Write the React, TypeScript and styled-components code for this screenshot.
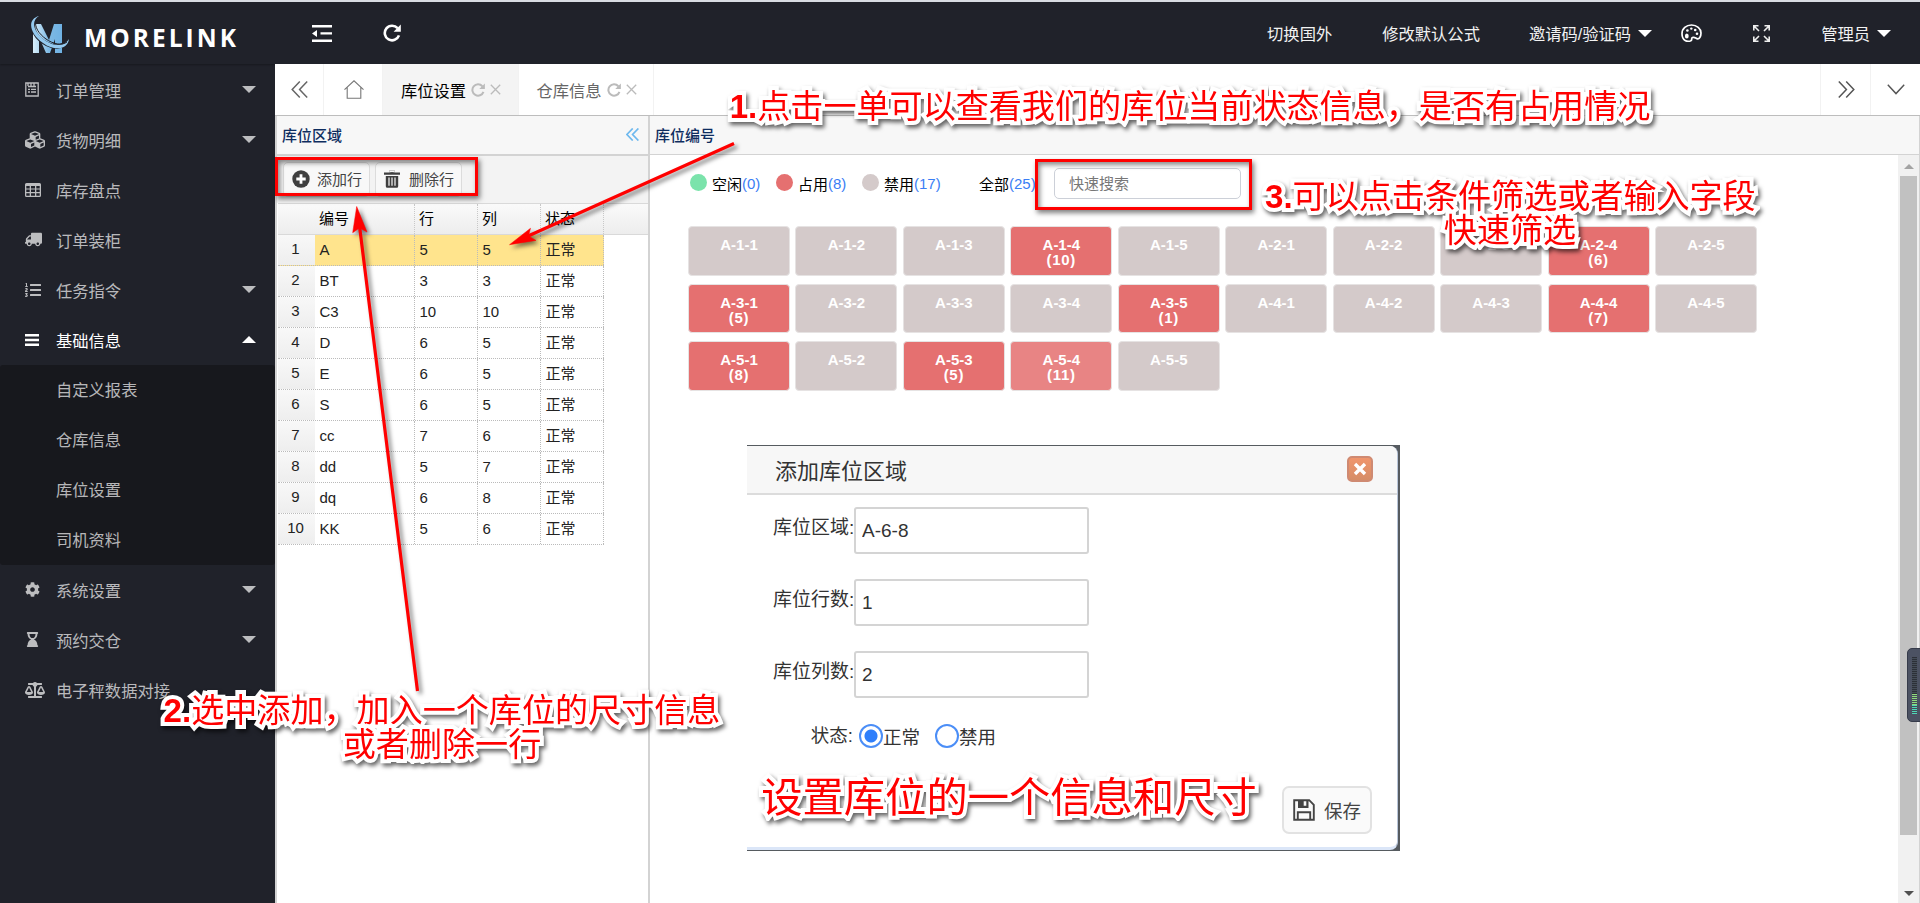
import React from "react";
import styled, { createGlobalStyle, css } from "styled-components";
import { FaBalanceScale, FaCubes, FaCog, FaHourglassEnd, FaListOl, FaTruck } from "react-icons/fa";

const GlobalStyle = createGlobalStyle`
  * { box-sizing: border-box; }
  body {
    margin: 0;
    overflow: hidden;
    background: #fff;
    font-family: "Liberation Sans", "Noto Sans CJK SC", sans-serif;
    font-size: 15px;
    color: #000;
  }
  button, input { font-family: inherit; margin: 0; }
`;

const Page = styled.div`
  position: relative;
  display: flex;
  width: 1920px;
  height: 903px;
  overflow: hidden;
  border-top: 2px solid #d9dce2;
`;

/* ---------- sidebar ---------- */
const Sidebar = styled.nav`
  flex: 0 0 275px;
  background: #20222a;
`;
const Logo = styled.div`
  display: flex;
  height: 62px;
  padding: 13px 0 0 29px;
  box-shadow: 0 1px 2px rgba(0, 0, 0, 0.3);
  margin-bottom: 1px;
`;
const Item = styled.div<{ $on?: boolean }>`
  display: flex;
  align-items: center;
  height: 50px;
  padding: 0 19px 1px 25px;
  font-size: 16.3px;
  color: ${(p) => (p.$on ? "#fff" : "rgba(255,255,255,.7)")};
  svg { display: block; }
`;
const ItemIcon = styled.span`
  flex: 0 0 31px;
`;
const ItemLabel = styled.span`
  flex: 1;
  white-space: nowrap;
`;
const Caret = styled.i<{ $up?: boolean; $light?: boolean }>`
  width: 0;
  height: 0;
  border: 7.5px solid transparent;
  ${(p) =>
    p.$up
      ? css`border-bottom-color: #fff; border-top-width: 0;`
      : css`border-top-color: ${p.$light ? "#fff" : "rgba(255,255,255,.7)"}; border-bottom-width: 0;`}
`;
const SubMenu = styled.div`
  background: #17181d;
  border-radius: 3px;
`;
const SubItem = styled.div`
  height: 50px;
  padding-left: 56px;
  font-size: 16.3px;
  line-height: 51px;
  color: rgba(255, 255, 255, 0.7);
`;

/* ---------- top bar and tabs ---------- */
const Main = styled.div`
  flex: 1;
  display: flex;
  flex-direction: column;
  min-width: 0;
`;
const TopBar = styled.header`
  display: flex;
  align-items: center;
  height: 62px;
  background: #20222a;
  color: #f2f2f2;
  font-size: 16.3px;
  padding: 0 29px 0 37px;
  svg { display: block; }
`;
const TopTool = styled.span<{ $gap: number }>`
  display: flex;
  align-items: center;
  gap: 7px;
  white-space: nowrap;
  margin-left: ${(p) => p.$gap}px;
`;
const TabBar = styled.div`
  display: flex;
  height: 52px;
  border-bottom: 1px solid #bdbdbd;
  color: #666;
`;
const TabCell = styled.div<{ $w: number; $on?: boolean; $left?: boolean }>`
  display: flex;
  align-items: center;
  justify-content: center;
  gap: 5px;
  width: ${(p) => p.$w}px;
  padding-left: 1px;
  font-size: 16.3px;
  background: ${(p) => (p.$on ? "#f4f4f4" : "#fff")};
  color: ${(p) => (p.$on ? "#000" : "#666")};
  border-${(p) => (p.$left ? "left" : "right")}: 1px solid #f2f2f2;
  svg { display: block; }
`;
const Spacer = styled.div`
  flex: 1;
`;

/* ---------- panels ---------- */
const Panels = styled.div`
  flex: 1;
  display: flex;
  min-height: 0;
`;
const AreaPanel = styled.section`
  flex: 0 0 375px;
  display: flex;
  flex-direction: column;
  border-left: 2px solid #d3d3d3;
  border-right: 2px solid #d3d3d3;
`;
const SlotPanel = styled.section`
  flex: 1;
  display: flex;
  flex-direction: column;
  border-right: 1px solid #d3d3d3;
`;
const PanelTitle = styled.div<{ $line: number }>`
  display: flex;
  align-items: center;
  justify-content: space-between;
  height: ${(p) => 38 + p.$line}px;
  padding: 0 9px 2px 5px;
  background: #f7f7f7;
  border-bottom: ${(p) => p.$line}px solid #d3d3d3;
  color: #0e2d5f;
  font-weight: 500;
`;
const Toolbar = styled.div`
  display: flex;
  gap: 5px;
  height: 47px;
  padding: 6px 6px;
  background: #f3f3f3;
`;
const ToolButton = styled.button<{ $gap: number }>`
  display: flex;
  align-items: center;
  gap: ${(p) => p.$gap}px;
  width: 87px;
  height: 35px;
  padding: 0 0 2px 8px;
  border: 1px solid #dcdcdc;
  border-radius: 5px;
  background: #f8f8f8;
  color: #444;
  font-size: 15px;
  white-space: nowrap;
`;
const columns = "37px 100px 63px 63px 63px";
const GridHead = styled.div`
  display: grid;
  grid-template-columns: ${columns};
  height: 32px;
  margin-left: 1px;
  border-top: 1px solid #d9d9d9;
  border-bottom: 1px solid #d9d9d9;
  background: linear-gradient(#fafafa, #ededed);
`;
const HeadCell = styled.div`
  padding-left: 4px;
  line-height: 29px;
  border-right: 1px dotted #c8c8c8;
`;
const GridRow = styled.div<{ $on?: boolean }>`
  display: grid;
  grid-template-columns: ${columns};
  width: 326px;
  height: 31px;
  margin-left: 1px;
  border-bottom: 1px dotted #bbb;
  background: ${(p) => (p.$on ? "#ffe48d" : "#fff")};
`;
const Num = styled.div`
  background: linear-gradient(#f8f8f8, #eeeeee);
  text-align: center;
  line-height: 28px;
  color: #222;
  padding-right: 2px;
`;
const Cell = styled.div`
  padding-left: 4.5px;
  line-height: 30px;
  border-right: 1px dotted #bbb;
  color: #222;
`;
const SlotBody = styled.div`
  flex: 1;
  display: flex;
  min-height: 0;
`;
const SlotContent = styled.div`
  flex: 1;
  padding: 13px 0 0 38px;
`;
const Filters = styled.div`
  display: flex;
  align-items: center;
  height: 31px;
  padding-left: 2px;
`;
const Legend = styled.span<{ $w: number }>`
  display: flex;
  align-items: center;
  width: ${(p) => p.$w}px;
  padding-bottom: 1px;
  white-space: nowrap;
  em { font-style: normal; color: #3a7ef5; }
`;
const Dot = styled.i<{ $c: string }>`
  width: 17px;
  height: 17px;
  margin: -2px 5px 0 0;
  border-radius: 50%;
  background: ${(p) => p.$c};
`;
const Search = styled.input`
  width: 187px;
  height: 31px;
  padding: 0 14px;
  border: 1px solid #ccd0d8;
  border-radius: 5px;
  font-size: 15px;
  background: #fff;
  &::placeholder { color: #777; }
`;
const Tiles = styled.div`
  display: grid;
  grid-template-columns: repeat(10, 102px);
  column-gap: 5.45px;
  row-gap: 8px;
  margin-top: 27px;
`;
const Tile = styled.div<{ $kind: "off" | "used" | "hover" }>`
  height: 49.5px;
  padding-top: 10.4px;
  border: 1px solid #e6e3e3;
  border-radius: 4px;
  background: ${(p) => ({ off: "#d4caca", used: "#e57070", hover: "#e88484" })[p.$kind]};
  color: #fff;
  font-weight: 700;
  text-align: center;
  line-height: 15px;
  small { display: block; font-size: 15px; letter-spacing: 0.7px; }
`;
const ScrollTrack = styled.div`
  display: flex;
  flex-direction: column;
  align-items: center;
  justify-content: space-between;
  width: 21px;
  background: #f1f1f1;
  padding: 9px 0 7px;
`;
const Thumb = styled.div`
  width: 17px;
  height: 659px;
  margin: 7px 0 auto;
  background: #c1c1c1;
`;
const Arrow = styled.i<{ $up?: boolean }>`
  border: 5px solid transparent;
  ${(p) =>
    p.$up
      ? css`border-top: 0; border-bottom-color: #a3a3a3;`
      : css`border-bottom: 0; border-top-color: #505050;`}
`;
const Gauge = styled.div`
  position: absolute;
  left: 1907px;
  top: 646px;
  width: 16px;
  height: 74px;
  padding: 8px 5px 8px 4px;
  border: 1px solid #363b4a;
  border-radius: 5px 0 0 5px;
  background: #4c5263;
`;
const GaugeBar = styled.div<{ $h: number; $c: string }>`
  height: ${(p) => p.$h}px;
  background: repeating-linear-gradient(${(p) => p.$c} 0 1px, #454d58 1px 2px);
`;

/* ---------- dialog ---------- */
const Dialog = styled.div`
  position: absolute;
  left: 747px;
  top: 443px;
  width: 653px;
  height: 406px;
  background: #565b60;
  padding: 1px 2px 1px 0;
`;
const DialogInner = styled.div`
  display: flex;
  flex-direction: column;
  height: 404px;
  background: #fff;
  border-radius: 0 8px 8px 0;
  border-bottom: 3px solid #dbe6f8;
  border-right: 1px solid #b9c6da;
  overflow: hidden;
`;
const DialogHead = styled.div`
  display: flex;
  align-items: center;
  justify-content: space-between;
  height: 49px;
  padding: 0 24px 2px 28px;
  background: #f7f7f7;
  border-bottom: 2px solid #dcdcdc;
  font-size: 22px;
  color: #333;
`;
const CloseButton = styled.button`
  display: flex;
  align-items: center;
  justify-content: center;
  width: 26px;
  height: 26px;
  padding: 0;
  border: 2px solid #cf8a72;
  border-radius: 5px;
  background: linear-gradient(#f0956c, #d68d66);
`;
const Form = styled.div`
  display: flex;
  flex-direction: column;
  gap: 25px;
  padding: 12px 0 0 26px;
`;
const Field = styled.label`
  display: flex;
  height: 47px;
  font-size: 19px;
  color: #333;
`;
const FieldLabel = styled.span<{ $gap?: number }>`
  width: 80px;
  margin-right: ${(p) => p.$gap ?? 1}px;
  line-height: 42px;
  text-align: right;
  white-space: nowrap;
`;
const FieldInput = styled.input`
  width: 235px;
  height: 47px;
  padding: 0 6px;
  border: 2px solid #d4d4d4;
  border-radius: 3px;
  font-size: 19px;
  color: #333;
`;
const Radios = styled.div`
  display: flex;
  align-items: center;
  height: 26px;
  font-size: 18.5px;
  color: #333;
`;
const Radio = styled.span<{ $on?: boolean }>`
  width: 24px;
  height: 24px;
  border: 2px solid #4b8ef7;
  border-radius: 50%;
  background: ${(p) => (p.$on ? "radial-gradient(#2f7ffb 0 6px, #fff 7px)" : "#fff")};
`;
const RadioLabel = styled.span`
  width: 52px;
`;
const SaveButton = styled.button`
  display: flex;
  align-items: center;
  gap: 9px;
  align-self: flex-end;
  width: 90px;
  height: 48px;
  margin: 37px 25px 0 0;
  padding: 0 0 1px 9px;
  border: 2px solid #e2e2e2;
  border-radius: 7px;
  background: #fafafa;
  color: #444;
  font-size: 18.5px;
  white-space: nowrap;
`;

/* ---------- annotations ---------- */
const Note = styled.div<{ $x: number; $y: number; $w: number; $size: number }>`
  position: absolute;
  left: ${(p) => p.$x}px;
  top: ${(p) => p.$y}px;
  width: ${(p) => p.$w}px;
  font-size: ${(p) => p.$size}px;
  line-height: 34px;
  text-align: center;
  white-space: nowrap;
  color: #f00;
  -webkit-text-stroke: 8px #fff;
  paint-order: stroke fill;
  stroke-linejoin: round;
  filter: drop-shadow(2px 3px 2px rgba(0, 0, 0, 0.6));
  b { font-weight: 700; }
`;
const RedFrame = styled.div<{ $x: number; $y: number; $w: number; $h: number }>`
  position: absolute;
  left: ${(p) => p.$x}px;
  top: ${(p) => p.$y}px;
  width: ${(p) => p.$w}px;
  height: ${(p) => p.$h}px;
  border: 3px solid #f00;
  box-shadow: 2px 3px 5px rgba(0, 0, 0, 0.5), inset 2px 3px 5px rgba(0, 0, 0, 0.45);
`;
const Arrows = styled.svg`
  position: absolute;
  left: 0;
  top: -2px;
  filter: drop-shadow(3px 3px 2px rgba(0, 0, 0, 0.5));
`;

/* ---------- icons ---------- */
const LogoArt = () => (
  <svg width="208" height="42" viewBox="0 0 208 42">
    <defs>
      <linearGradient id="mk" x1="0" x2="1">
        <stop offset="0" stopColor="#d8effb" />
        <stop offset="0.55" stopColor="#7db9e4" />
        <stop offset="1" stopColor="#6fb2e4" />
      </linearGradient>
    </defs>
    <path d="M4 9h8l8 16 5-16h8v29h-7V24l-5 14h-4L10 22v16H4z" fill="url(#mk)" />
    <path d="M6 4C0 13 8 24 18 29c8 4 16 3 21-3" fill="none" stroke="#20222a" strokeWidth="4.5" />
    <path d="M10 1C3 5 3 14 13 23c9 8 21 10 27 1-1 10-14 13-26 4C0 18-2 4 10 1z" fill="#94c9ee" />
    <path d="M7 5c-2 7 3 14 10 19 7 5 16 7 21 3" fill="none" stroke="#20222a" strokeWidth="1" />
    <text x="55" y="32" textLength="152" lengthAdjust="spacing" fontFamily="Open Sans" fontWeight="700" fontSize="24.500" fill="#fff">
      MORELINK
    </text>
  </svg>
);
const FormIcon = () => (
  <svg width="14" height="15" viewBox="0 0 14 15" fill="none" stroke="currentColor" strokeWidth="1.3">
    <path d="M.8 1h12.4v13H.8zM3 4.5h8M3 1v3M6 1v3M9 1v3M3 7.3h2M6 7.3h5M3 10h2M6 10h5" />
  </svg>
);
const TableIcon = () => (
  <svg width="16" height="14" viewBox="0 0 16 14">
    <path fill="currentColor" fillRule="evenodd" d="M1.500 0h13Q16 0 16 1.500v11Q16 14 14.500 14h-13Q0 14 0 12.500v-11Q0 0 1.500 0zM1.300 3v2.400h3.400V3zm4.700 0v2.400h4V3zm5.300 0v2.400h3.400V3zM1.300 6.600V9h3.400V6.600zm4.700 0V9h4V6.600zm5.300 0V9h3.400V6.600zM1.300 10.300v2.400h3.400v-2.400zm4.700 0v2.400h4v-2.400zm5.300 0v2.400h3.400v-2.400z" />
  </svg>
);
const BarsIcon = () => (
  <svg width="14" height="12" viewBox="0 0 14 12" fill="currentColor">
    <path d="M0 0h14v2.4H0zM0 4.8h14v2.4H0zM0 9.6h14V12H0z" />
  </svg>
);
const FoldIcon = () => (
  <svg width="20" height="17" viewBox="0 0 20 17" fill="#fff">
    <path d="M0 0h20v2.4H0zM8.5 7.2H20v2.4H8.5zM0 14.6h20V17H0zM5 5v7L0 8.4z" />
  </svg>
);
const Refresh = ({ size, color }: { size: number; color: string }) => (
  <svg width={size} height={size} viewBox="0 0 18 18">
    <path d="M14.6 4.2A7.3 7.3 0 1 0 16 11.4" fill="none" stroke={color} strokeWidth="2.6" />
    <path d="M17.8.6v7.2h-7.2z" fill={color} />
  </svg>
);
const Cross = () => (
  <svg width="11" height="11" viewBox="0 0 11 11">
    <path d="M.8.8l9.4 9.4M10.2.8L.8 10.2" stroke="#bbb" strokeWidth="1.3" />
  </svg>
);
const Double = ({ flip, color, size = 17, w = 1.5 }: { flip?: boolean; color: string; size?: number; w?: number }) => (
  <svg width={size} height={size} viewBox="0 0 17 17" fill="none" stroke={color} strokeWidth={w}>
    <path d={flip ? "M.8.6l7.6 7.9L.8 16.4M8.2.6l7.6 7.9-7.6 7.9" : "M8.8.6L1.2 8.5l7.6 7.9M16.2.6L8.6 8.5l7.6 7.9"} />
  </svg>
);
const HomeIcon = () => (
  <svg width="20" height="19" viewBox="0 0 20 19" fill="none" stroke="#777" strokeWidth="1.1">
    <path d="M.5 9.7L10 .8l9.5 8.9M3.2 7.6v10.6h13.6V7.6" />
  </svg>
);
const DownIcon = () => (
  <svg width="18" height="11" viewBox="0 0 18 11" fill="none" stroke="#555" strokeWidth="1.4">
    <path d="M.8.8L9 9.6 17.2.8" />
  </svg>
);
const PaletteIcon = () => (
  <svg width="21" height="18" viewBox="0 0 21 18">
    <path
      d="M4.2 16.6C1.8 15 1 12.500 1 9.700 1 4.600 5.200 1 10.500 1S20 4.600 20 9c0 4-2 6-3.300 5.800-2-.3-3-2.300-5.200-1.300-2 1 .6 2.600-2.200 3.500-1.800.5-3.700.3-5.100-.4z"
      fill="none" stroke="#fff" strokeWidth="1.7"
    />
    <g fill="#fff">
      <circle cx="6.400" cy="6.500" r="1.300" /><circle cx="10.300" cy="4.600" r="1.200" /><circle cx="14.200" cy="6" r="1.300" />
      <circle cx="16" cy="9.700" r="1.300" /><ellipse cx="5.800" cy="12" rx="1.900" ry="2.500" />
    </g>
  </svg>
);
const FullIcon = () => (
  <svg width="17" height="17" viewBox="0 0 17 17" fill="none" stroke="#eee" strokeWidth="1.6">
    <path d="M.8 5.500V.8h4.700M1 1l5 5M11.500.8h4.700v4.700M16 1l-5 5M.8 11.500v4.700h4.700M1 16l5-5M16.200 11.500v4.700h-4.700M16 16l-5-5" />
  </svg>
);
const PlusIcon = () => (
  <svg width="18" height="18" viewBox="0 0 18 18">
    <circle cx="9" cy="9" r="8.700" fill="#3f3f3f" />
    <path d="M9 4.300v9.400M4.300 9h9.400" stroke="#fff" strokeWidth="2.800" />
  </svg>
);
const TrashIcon = () => (
  <svg width="16" height="18" viewBox="0 0 16 18">
    <path d="M0 2.600h16v2.200H0zM5 2.600V.8h6v1.800M1.800 6h12.400v10.200q0 1.500-1.500 1.500H3.300q-1.500 0-1.500-1.500z" fill="#3f3f3f" />
    <path d="M5.800 2.600V1.600h4.400v1M5 7.500v8.300M8 7.500v8.300M11 7.500v8.300" stroke="#f8f8f8" strokeWidth="1.200" />
  </svg>
);
const SaveIcon = () => (
  <svg width="22" height="22" viewBox="0 0 22 22">
    <path d="M1.200 1.200h15l4.600 4.600v15H1.200zM4.800 20.500v-7.200h12.400v7.200" fill="none" stroke="#444" strokeWidth="1.900" />
    <path d="M5 1v8h10.500V1h-2.200v5.800h-2.600V1z" fill="#444" />
  </svg>
);

/* ---------- data ---------- */
const rows = [
  ["A", 5, 5], ["BT", 3, 3], ["C3", 10, 10], ["D", 6, 5], ["E", 6, 5],
  ["S", 6, 5], ["cc", 7, 6], ["dd", 5, 7], ["dq", 6, 8], ["KK", 5, 6],
];
const used: Record<string, number> = {
  "A-1-4": 10, "A-2-4": 6, "A-3-1": 5, "A-3-5": 1, "A-4-4": 7, "A-5-1": 8, "A-5-3": 5, "A-5-4": 11,
};
const slots = [1, 2, 3, 4, 5].flatMap((r) => [1, 2, 3, 4, 5].map((c) => `A-${r}-${c}`));

const FlippedTruck = styled(FaTruck)`
  transform: scaleX(-1);
`;

const MenuItem = ({ icon, label, caret, open }: { icon: React.ReactNode; label: string; caret?: boolean; open?: boolean }) => (
  <Item $on={open}>
    <ItemIcon>{icon}</ItemIcon>
    <ItemLabel>{label}</ItemLabel>
    {caret && <Caret $up={open} />}
  </Item>
);

export default function App() {
  return (
    <Page>
      <GlobalStyle />
      <Sidebar>
        <Logo><LogoArt /></Logo>
        <MenuItem icon={<FormIcon />} label="订单管理" caret />
        <MenuItem icon={<FaCubes size={20} />} label="货物明细" caret />
        <MenuItem icon={<TableIcon />} label="库存盘点" />
        <MenuItem icon={<FlippedTruck size={17} />} label="订单装柜" />
        <MenuItem icon={<FaListOl size={16} />} label="任务指令" caret />
        <MenuItem icon={<BarsIcon />} label="基础信息" caret open />
        <SubMenu>
          {["自定义报表", "仓库信息", "库位设置", "司机资料"].map((t) => <SubItem key={t}>{t}</SubItem>)}
        </SubMenu>
        <MenuItem icon={<FaCog size={15} />} label="系统设置" caret />
        <MenuItem icon={<FaHourglassEnd size={15} />} label="预约交仓" caret />
        <MenuItem icon={<FaBalanceScale size={20} />} label="电子秤数据对接" />
      </Sidebar>

      <Main>
        <TopBar>
          <FoldIcon />
          <TopTool $gap={51}><Refresh size={18} color="#fff" /></TopTool>
          <Spacer />
          <TopTool $gap={0}>切换国外</TopTool>
          <TopTool $gap={50}>修改默认公式</TopTool>
          <TopTool $gap={49}>邀请码/验证码<Caret $light /></TopTool>
          <TopTool $gap={29}><PaletteIcon /></TopTool>
          <TopTool $gap={51}><FullIcon /></TopTool>
          <TopTool $gap={51}>管理员<Caret $light /></TopTool>
        </TopBar>
        <TabBar>
          <TabCell $w={49}><Double color="#666" /></TabCell>
          <TabCell $w={59}><HomeIcon /></TabCell>
          <TabCell $w={136} $on>库位设置<Refresh size={14} color="#bbb" /><Cross /></TabCell>
          <TabCell $w={135}>仓库信息<Refresh size={14} color="#bbb" /><Cross /></TabCell>
          <Spacer />
          <TabCell $w={50} $left><Double flip color="#555" /></TabCell>
          <TabCell $w={50} $left><DownIcon /></TabCell>
        </TabBar>

        <Panels>
          <AreaPanel>
            <PanelTitle $line={2}>库位区域<Double color="#6db8ee" size={13} w={2.200} /></PanelTitle>
            <Toolbar>
              <ToolButton $gap={7}><PlusIcon />添加行</ToolButton>
              <ToolButton $gap={9}><TrashIcon />删除行</ToolButton>
            </Toolbar>
            <GridHead>
              <div />
              <HeadCell>编号</HeadCell>
              <HeadCell>行</HeadCell>
              <HeadCell>列</HeadCell>
              <HeadCell>状态</HeadCell>
            </GridHead>
            {rows.map(([name, r, c], i) => (
              <GridRow key={name} $on={i === 0}>
                <Num>{i + 1}</Num>
                <Cell>{name}</Cell>
                <Cell>{r}</Cell>
                <Cell>{c}</Cell>
                <Cell>正常</Cell>
              </GridRow>
            ))}
          </AreaPanel>

          <SlotPanel>
            <PanelTitle $line={1}>库位编号</PanelTitle>
            <SlotBody>
              <SlotContent>
                <Filters>
                  <Legend $w={86}><Dot $c="#7be3ab" />空闲<em>(0)</em></Legend>
                  <Legend $w={86}><Dot $c="#e57070" />占用<em>(8)</em></Legend>
                  <Legend $w={117}><Dot $c="#d4caca" />禁用<em>(17)</em></Legend>
                  <Legend $w={75}>全部<em>(25)</em></Legend>
                  <Search placeholder="快速搜索" />
                </Filters>
                <Tiles>
                  {slots.map((s) => (
                    <Tile key={s} $kind={s === "A-5-4" ? "hover" : used[s] ? "used" : "off"}>
                      {s}
                      {used[s] && <small>({used[s]})</small>}
                    </Tile>
                  ))}
                </Tiles>
              </SlotContent>
              <ScrollTrack>
                <Arrow $up />
                <Thumb />
                <Arrow />
              </ScrollTrack>
            </SlotBody>
          </SlotPanel>
        </Panels>
      </Main>

      <Dialog>
        <DialogInner>
          <DialogHead>
            添加库位区域
            <CloseButton>
              <svg width="14" height="14" viewBox="0 0 14 14">
                <path d="M2 2l10 10M12 2L2 12" stroke="#fff" strokeWidth="3.400" />
              </svg>
            </CloseButton>
          </DialogHead>
          <Form>
            <Field><FieldLabel>库位区域:</FieldLabel><FieldInput defaultValue="A-6-8" /></Field>
            <Field><FieldLabel>库位行数:</FieldLabel><FieldInput defaultValue="1" /></Field>
            <Field><FieldLabel>库位列数:</FieldLabel><FieldInput defaultValue="2" /></Field>
            <Radios>
              <FieldLabel $gap={6}>状态:</FieldLabel>
              <Radio $on /><RadioLabel>正常</RadioLabel>
              <Radio /><RadioLabel>禁用</RadioLabel>
            </Radios>
          </Form>
          <SaveButton><SaveIcon />保存</SaveButton>
        </DialogInner>
      </Dialog>

      <Gauge>
        <GaugeBar $h={37} $c="#2c3038" />
        <GaugeBar $h={11} $c="#8fdc7c" />
        <GaugeBar $h={9} $c="#4fd8b8" />
      </Gauge>

      <RedFrame $x={275} $y={155} $w={203} $h={39} />
      <RedFrame $x={1035} $y={157} $w={217} $h={51} />
      <Arrows width="1920" height="903" fill="#f00" stroke="#f00">
        <path d="M734 143.500L527 236.500M417.500 691L359.500 226" fill="none" strokeWidth="3.200" />
        <path d="M509.500 244.700l21-16.400-2 7.700 7.500 4.400zM356.700 206.500l10.300 25.500-7.500-4-6.800 4.700z" strokeWidth="0.500" />
      </Arrows>
      <Note $x={729} $y={88} $w={922} $size={33.1}><b>1.</b>点击一单可以查看我们的库位当前状态信息，是否有占用情况</Note>
      <Note $x={163} $y={692} $w={558} $size={33.1}><b>2.</b>选中添加，加入一个库位的尺寸信息<br />或者删除一行</Note>
      <Note $x={1265} $y={178} $w={490} $size={33.1}><b>3.</b>可以点击条件筛选或者输入字段<br />快速筛选</Note>
      <Note $x={761} $y={779} $w={496} $size={41.3}>设置库位的一个信息和尺寸</Note>
    </Page>
  );
}
